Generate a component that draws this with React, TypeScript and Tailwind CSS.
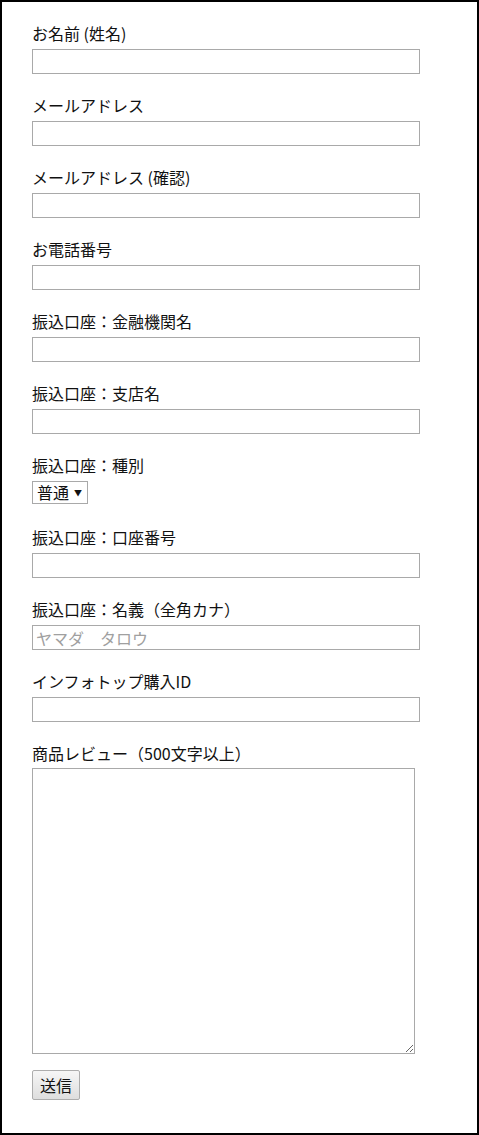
const fields = [
  { label: "お名前 (姓名)" },
  { label: "メールアドレス" },
  { label: "メールアドレス (確認)" },
  { label: "お電話番号" },
  { label: "振込口座：金融機関名" },
  { label: "振込口座：支店名" },
];

const fields2 = [
  { label: "振込口座：口座番号", placeholder: "" },
  { label: "振込口座：名義（全角カナ）", placeholder: "ヤマダ　タロウ" },
  { label: "インフォトップ購入ID", placeholder: "" },
];

const Field = ({ label, placeholder }: { label: string; placeholder?: string }) => (
  <div className="mb-[22px]">
    <label className="block leading-[18px] mb-[7px]">{label}</label>
    <input
      type="text"
      placeholder={placeholder}
      className="block w-[388px] h-[25px] border border-[#a9a9a9] bg-white px-[3px] text-base placeholder:text-[#a0a0a0] outline-none"
    />
  </div>
);

export default function App() {
  return (
    <div
      className="w-[479px] h-[1135px] border-2 border-black bg-white pl-[30px] pt-[22px] text-base text-[#111]"
      style={{ fontFamily: '"Noto Sans CJK JP", "Noto Sans", sans-serif' }}
    >
      {fields.map((f) => (
        <Field key={f.label} label={f.label} />
      ))}

      <div className="mb-[24px]">
        <label className="block leading-[18px] mb-[7px]">振込口座：種別</label>
        <div className="flex items-center h-[23px] w-[56px] border border-[#a9a9a9] bg-white">
          <select className="appearance-none bg-transparent pl-[4px] pr-[4px] text-base leading-[21px] outline-none">
            <option>普通</option>
            <option>当座</option>
          </select>
          <span className="text-[8px] leading-none">▼</span>
        </div>
      </div>

      {fields2.map((f) => (
        <Field key={f.label} label={f.label} placeholder={f.placeholder} />
      ))}

      <div className="mb-[16px]">
        <label className="block leading-[18px] mb-[6px]">商品レビュー（500文字以上）</label>
        <textarea className="block w-[383px] h-[286px] border border-[#a9a9a9] bg-white outline-none" />
      </div>

      <button className="w-[48px] h-[30px] border border-[#adadad] rounded-[2px] bg-gradient-to-b from-[#f6f6f6] to-[#dedede] text-base leading-none">
        送信
      </button>
    </div>
  );
}
